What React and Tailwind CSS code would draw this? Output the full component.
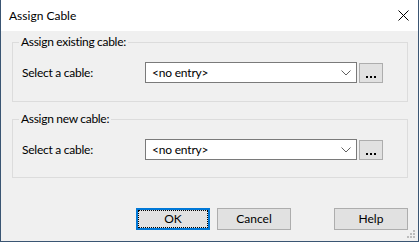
const font = { fontFamily: '"Lato", "Liberation Sans", sans-serif' };

function Combo() {
  return (
    <div className="flex items-center">
      <div className="w-[212px] h-[21px] bg-white border border-[#7a7a7a] flex items-center justify-between pl-[6px] pr-[4px]">
        <span className="text-[12px] leading-none text-black tracking-[-0.2px]">&lt;no entry&gt;</span>
        <svg width="10" height="6" viewBox="0 0 10 6" className="mr-[1px]">
          <path d="M0.5 0.5 L5 5 L9.5 0.5" fill="none" stroke="#606060" strokeWidth="1" />
        </svg>
      </div>
      <button className="ml-[2px] w-[24px] h-[20px] bg-[#e1e1e1] border border-[#adadad] flex items-end justify-center gap-[2px] pb-[4px]">
        <span className="w-[2px] h-[2px] bg-black" />
        <span className="w-[2px] h-[2px] bg-black" />
        <span className="w-[2px] h-[2px] bg-black" />
      </button>
    </div>
  );
}

function Group({ title, className }) {
  return (
    <fieldset className={`border border-[#dcdcdc] pl-[9px] ${className}`}>
      <legend className="ml-[-3px] px-[2px] text-[12px] leading-[16px] text-black tracking-[-0.3px]">{title}</legend>
      <div className="flex items-center mt-[12px]">
        <span className="w-[123px] text-[12px] text-black tracking-[-0.25px]">Select a cable:</span>
        <Combo />
      </div>
    </fieldset>
  );
}

export default function App() {
  return (
    <div style={font} className="w-[419px] h-[242px] flex flex-col bg-[#f0f0f0] border-x border-b border-[#3a5573]">
      {/* title bar */}
      <div className="h-[31px] shrink-0 bg-white flex items-center justify-between pl-[8px] pr-[9px]">
        <span className="text-[12px] text-black">Assign Cable</span>
        <svg width="11" height="11" viewBox="0 0 11 11">
          <path d="M0.5 0.5 L10.5 10.5 M10.5 0.5 L0.5 10.5" stroke="#000" strokeWidth="1" />
        </svg>
      </div>

      <div className="relative flex-1 flex flex-col pl-[11px] pr-[10px] pt-[3px]">
        <Group title="Assign existing cable:" className="h-[68px]" />
        <Group title="Assign new cable:" className="h-[67px] mt-[9px]" />

        <div className="flex justify-end mt-[30px] text-[12px] text-black">
          <button className="w-[74px] h-[22px] border-2 border-[#0078d7] bg-[#e1e1e1] p-0">
            <span className="flex w-full h-full items-center justify-center border border-dotted border-black">OK</span>
          </button>
          <button className="ml-[7px] w-[74px] h-[22px] border border-[#adadad] bg-[#e1e1e1]">Cancel</button>
          <button className="ml-[43px] w-[74px] h-[22px] border border-[#adadad] bg-[#e1e1e1]">Help</button>
        </div>

        {/* size grip */}
        <svg width="8" height="8" viewBox="0 0 8 8" className="absolute right-[3px] bottom-[3px]">
          <rect x="6" y="0" width="2" height="2" fill="#bcbcbc" />
          <rect x="3" y="3" width="2" height="2" fill="#bcbcbc" />
          <rect x="6" y="3" width="2" height="2" fill="#bcbcbc" />
          <rect x="0" y="6" width="2" height="2" fill="#bcbcbc" />
          <rect x="3" y="6" width="2" height="2" fill="#bcbcbc" />
          <rect x="6" y="6" width="2" height="2" fill="#bcbcbc" />
        </svg>
      </div>
    </div>
  );
}
